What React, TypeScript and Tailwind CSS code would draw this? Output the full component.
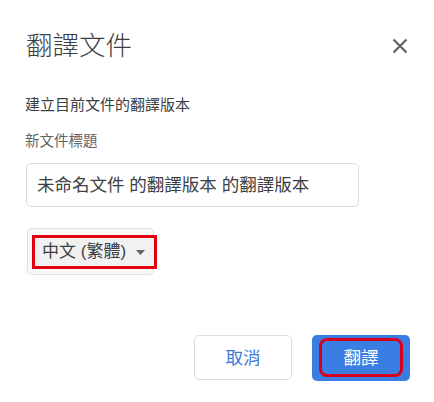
import React from "react";

const FONT = { fontFamily: '"Liberation Sans", Arial, "Noto Sans CJK TC", sans-serif' };

export default function App() {
  return (
    <div className="relative w-[434px] h-[402px] bg-white overflow-hidden" style={FONT}>
      <div className="flex flex-col pl-[25px] pr-[24px]">
        {/* Header */}
        <div className="mt-[30px] flex items-center justify-between">
          <h1 className="text-[26.5px] leading-[32px] font-light text-[#3c4043] ml-[1px]">翻譯文件</h1>
          <button className="-mr-[2px] w-[24px] h-[24px] flex items-center justify-center">
            <svg width="16" height="16" viewBox="0 0 16 16">
              <path d="M1.5 1.5 L14.5 14.5 M14.5 1.5 L1.5 14.5" stroke="#5f6368" strokeWidth="2.2" strokeLinecap="butt" />
            </svg>
          </button>
        </div>

        <p className="mt-[33px] text-[15px] leading-[20px] text-[#3c4043]">建立目前文件的翻譯版本</p>
        <p className="mt-[16px] text-[14.5px] leading-[20px] text-[#5f6368]">新文件標題</p>

        <div className="mt-[12px] w-[333px] h-[44px] ml-[1px] border border-[#dadce0] rounded-[5px] flex items-center pl-[10px]">
          <span className="text-[17.5px] leading-[24px] text-[#3c4043] whitespace-nowrap">未命名文件 的翻譯版本 的翻譯版本</span>
        </div>

        <div className="mt-[21px] ml-[2px] relative w-[127px] h-[47px] border border-[#e0e0e0] rounded-[5px] bg-[#f8f8f8] flex items-center">
          <div className="absolute left-[4px] top-[6px] w-[125px] h-[34px] bg-[#f1f1f1] border-[3px] border-[#e00010] flex items-center pl-[7px]">
            <span className="text-[17px] leading-[22px] text-[#3c4043] whitespace-nowrap">中文 (繁體)</span>
            <svg className="ml-[10px]" width="9" height="5" viewBox="0 0 9 5">
              <path d="M0 0 L9 0 L4.5 5 Z" fill="#5f6368" />
            </svg>
          </div>
        </div>

        <div className="mt-[60px] flex justify-end gap-[20px]">
          <button className="w-[98px] h-[45px] border border-[#dadce0] rounded-[5px] bg-white flex items-center justify-center">
            <span className="text-[17.5px] leading-[22px] text-[#3d7ad6]">取消</span>
          </button>
          <button className="relative w-[98px] h-[46px] rounded-[5px] bg-[#3a7ee4] flex items-center justify-center">
            <div className="absolute left-[7px] top-[3px] right-[7px] bottom-[4px] border-[3px] border-[#d6001c] rounded-[8px]" />
            <span className="relative text-[17.5px] leading-[22px] text-white">翻譯</span>
          </button>
        </div>
      </div>
    </div>
  );
}
